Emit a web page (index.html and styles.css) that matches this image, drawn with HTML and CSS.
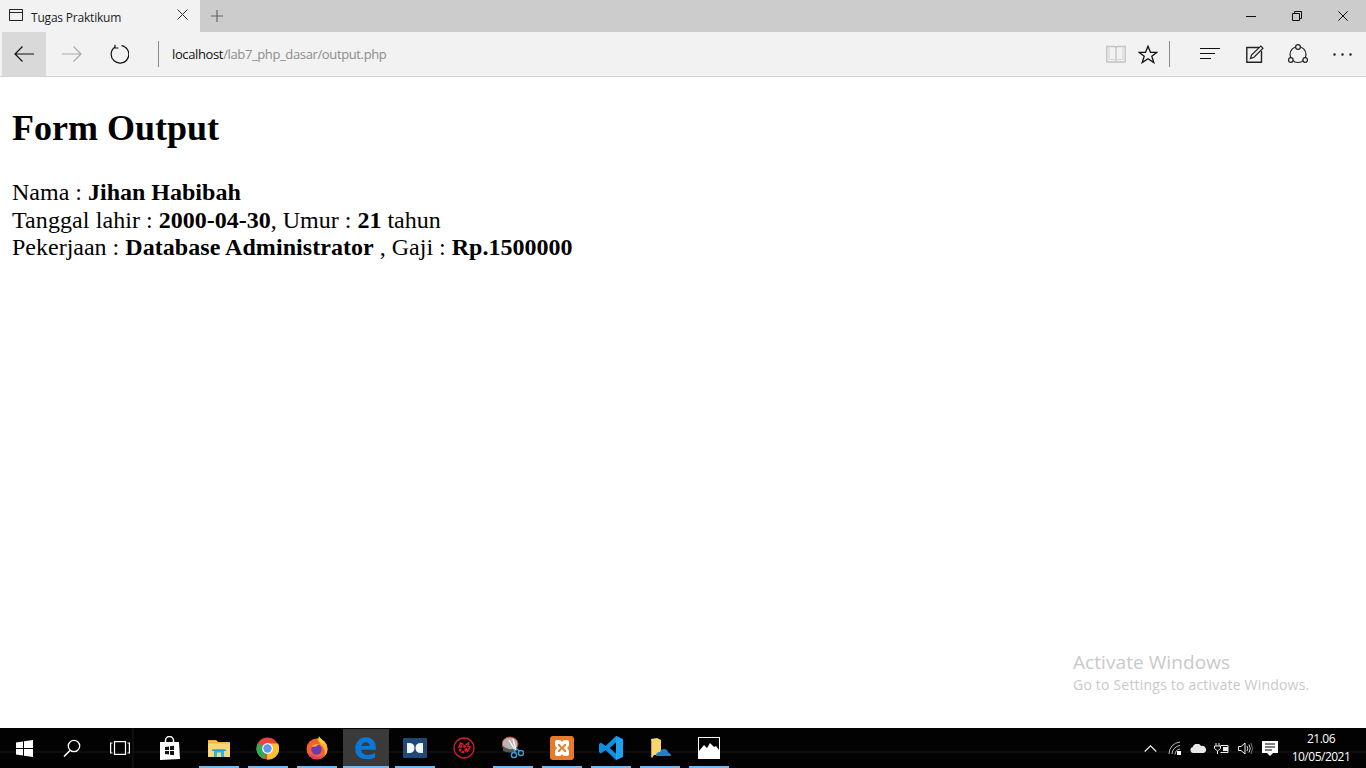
FILE: index.html
```html
<!DOCTYPE html>
<html lang="id">
<head>
<meta charset="utf-8">
<title>Tugas Praktikum</title>
<link rel="stylesheet" href="styles.css">
</head>
<body>
<div class="screen">
  <header class="chrome">
    <div class="tabstrip">
      <div class="tab">
        <svg class="tab-icon" width="14" height="12" viewBox="0 0 14 12"><path d="M.5.5h13v11H.5zM.5 3.500h13" fill="none" stroke="#222"/></svg>
        <span class="tab-title">Tugas Praktikum</span>
        <svg class="tab-close" width="11" height="11" viewBox="0 0 11 11"><path d="M.5.5l10 10M10.500.5l-10 10" stroke="#333" fill="none"/></svg>
      </div>
      <svg class="new-tab" width="12" height="12" viewBox="0 0 12 12"><path d="M6 0v12M0 6h12" stroke="#666" stroke-width="1.200" fill="none"/></svg>
      <div class="win-controls">
        <div class="win-btn"><svg width="10" height="10" viewBox="0 0 10 10"><path d="M0 5.500h10" stroke="#111"/></svg></div>
        <div class="win-btn"><svg width="10" height="10" viewBox="0 0 10 10"><path d="M.5 2.500h7v7h-7zM2.500 2.500v-2h7v7h-2" stroke="#111" fill="none"/></svg></div>
        <div class="win-btn"><svg width="10" height="10" viewBox="0 0 10 10"><path d="M.3.3l9.400 9.400M9.700.3L.3 9.700" stroke="#111" fill="none"/></svg></div>
      </div>
    </div>
    <div class="toolbar">
      <div class="nav-btn active"><svg width="20" height="16" viewBox="0 0 20 16"><path d="M20 8H1M8.500.5L1 8l7.500 7.500" stroke="#111" stroke-width="1.200" fill="none"/></svg></div>
      <div class="nav-btn"><svg width="20" height="16" viewBox="0 0 20 16"><path d="M0 8h19M11.500.5L19 8l-7.500 7.500" stroke="#aaa" stroke-width="1.200" fill="none"/></svg></div>
      <div class="nav-btn nav-reload"><svg width="20" height="20" viewBox="0 0 20 20"><path d="M6.300 2.800A8.800 8.800 0 1 0 12.500 1.600M6 .8v3.200h3.400" stroke="#111" stroke-width="1.200" fill="none"/></svg></div>
      <div class="addr-sep"></div>
      <div class="url"><span class="url-host">localhost</span>/lab7_php_dasar/output.php</div>
      <div class="tools-right">
        <svg class="t-book" width="20" height="18" viewBox="0 0 20 18"><path d="M.8 1.500H8q2 0 2 1.500 0-1.500 2-1.500h7.200V17H.8zM10 3v14" stroke="#c2c2c2" stroke-width="1.300" fill="none"/><path d="M3 2v12.500h5.500q1.500 0 1.500 1 0-1 1.500-1H17V2" stroke="#d4d4d4" fill="none"/></svg>
        <svg class="t-star" width="20" height="19" viewBox="0 0 20 19"><path d="M10 1.300l2.500 6h6.500l-5.200 4 2 6.300L10 13.800l-5.800 3.800 2-6.300-5.200-4h6.500z" stroke="#111" stroke-width="1.300" fill="none"/></svg>
        <div class="t-sep"></div>
        <svg class="t-hub" width="20" height="14" viewBox="0 0 20 14"><path d="M0 1.500h20M0 6.500h15M0 11.500h11" stroke="#111" stroke-width="1.200" fill="none"/></svg>
        <svg class="t-note" width="18" height="18" viewBox="0 0 18 18"><path d="M13 2.500H.8v14.700h14.700V6" stroke="#222" stroke-width="1.400" fill="none"/><path d="M4.500 13.500l1-3.500L14.800 1l2.200 2.200-9 9z" fill="#f2f2f2" stroke="#222" stroke-width="1.200"/></svg>
        <svg class="t-share" width="20" height="20" viewBox="0 0 20 20"><circle cx="10" cy="10.500" r="8" fill="none" stroke="#222" stroke-width="1.200"/><circle cx="10" cy="3" r="2.400" fill="#f2f2f2" stroke="#222" stroke-width="1.200"/><circle cx="2.800" cy="16" r="2.300" fill="#f2f2f2" stroke="#222" stroke-width="1.200"/><circle cx="17.200" cy="16" r="2.300" fill="#f2f2f2" stroke="#222" stroke-width="1.200"/></svg>
        <svg class="t-more" width="19" height="3" viewBox="0 0 19 3"><circle cx="1.500" cy="1.500" r="1.200" fill="#222"/><circle cx="9.500" cy="1.500" r="1.200" fill="#222"/><circle cx="17.500" cy="1.500" r="1.200" fill="#222"/></svg>
      </div>
    </div>
  </header>

  <main class="page">
    <h2 class="page-title">Form Output</h2>
    <p class="result">
      Nama : <b>Jihan Habibah</b><br>
      <span class="fit-label">Tanggal lahir</span> : <b>2000-04-30</b>, Umur : <b>21</b> tahun<br>
      Pekerjaan : <b class="fit-bold">Database Administrator</b> , Gaji : <b>Rp.1500000</b>
    </p>
    <div class="watermark">
      <div class="wm-title">Activate Windows</div>
      <div class="wm-sub">Go to Settings to activate Windows.</div>
    </div>
  </main>

  <footer class="taskbar">
    <div class="task-slot sys"><svg width="17" height="17" viewBox="0 0 17 17"><path d="M0 2.400L7 1.400V8H0zM8 1.200L17 0V8H8zM0 9h7v6.600L0 14.600zM8 9h9v8L8 15.800z" fill="#fff"/></svg></div>
    <div class="task-slot sys"><svg width="18" height="18" viewBox="0 0 18 18"><circle cx="11" cy="7" r="5.700" fill="none" stroke="#fff" stroke-width="1.300"/><path d="M7 11.500L1 17.500" stroke="#fff" stroke-width="1.600"/></svg></div>
    <div class="task-slot sys"><svg width="20" height="14" viewBox="0 0 20 14"><path d="M4.500.6h11v12.800h-11zM2.500 2H.6v10h1.900M17.500 2h1.900v10h-1.900" fill="none" stroke="#fff" stroke-width="1.200"/></svg></div>
    <div class="task-slot store"><svg width="21" height="24" viewBox="0 0 21 24"><path d="M1 6h19l1 17L1 24z" fill="#fff"/><path d="M6.500 7V4.500a4 4 0 0 1 8 0V7" fill="none" stroke="#fff" stroke-width="1.500"/><path d="M6 11l4-.5V14H6zM11 10.300l4-.5V14h-4zM6 15h4v3.500l-4-.5zM11 15h4v4.200l-4-.5z" fill="#111"/></svg></div>
    <div class="task-slot open"><svg width="22" height="18" viewBox="0 0 22 18"><path d="M0 1h8l2 2h12v15H0z" fill="#f6d77a"/><path d="M0 2.500h8V1H0z" fill="#e0ad3a"/><path d="M0 3h22v1.500H0z" fill="#e8b94a"/><path d="M6 18v-7.500h10V18h-3v-4.500H9V18z" fill="#29b6e8"/><path d="M4 10.500h14V12H4z" fill="#1b9fd4"/></svg></div>
    <div class="task-slot open"><svg width="23" height="23" viewBox="0 0 23 23"><circle cx="11.500" cy="11.500" r="11" fill="#e8453c"/><path d="M11.500 11.500L1.900 6.100A11 11 0 0 0 8 22z" fill="#34a853"/><path d="M11.500 6.500H22a11 11 0 0 1-11 16z" fill="#fbc02d"/><circle cx="11.500" cy="11.500" r="5.400" fill="#fff"/><circle cx="11.500" cy="11.500" r="4.200" fill="#5a97ee"/></svg></div>
    <div class="task-slot open"><svg width="24" height="24" viewBox="0 0 24 24"><circle cx="12" cy="13" r="10.500" fill="#f4622b"/><path d="M12 2.500A10.500 10.500 0 0 1 22.500 13c0 3-1 5-3 7 1-4 0-9-4-11-1-2-2-4-3.500-6.500z" fill="#fbb03b"/><path d="M14 0c1 2.500 5 4.500 6.500 9-2-2-4-3-6-3.500C13 4 13.500 2 14 0z" fill="#fdd835"/><circle cx="11.500" cy="13.500" r="5.200" fill="#6a3ab2"/><path d="M6.500 11c1.500-2.500 5-3.500 7.500-2.500-1.500.5-2 1-2.500 2z" fill="#f9a33a"/><path d="M3 18c2 3 6 5 9.500 5 2.500 0 5-1 6.500-2.500-3 1-6.500 1-9-.5-3-1.500-5-1.500-7-2z" fill="#e8376e"/></svg></div>
    <div class="task-slot open current"><svg class="slot-icon" width="21" height="22" viewBox="0 0 21 22"><path d="M.2 11.500C.5 5 5 .3 11 .3c6 0 9.800 4.200 9.800 10v2.500H6.200c.3 3.700 3 5.200 6.300 5.200 2.800 0 5.500-.8 7.500-2.200v4.700c-2.200 1.200-5 1.800-8 1.800-7 0-11-3.700-11.500-8-.3-3.500 1.500-7 5-9-1.300 1.400-2.200 3-2.500 5 2.800-3.800 9.800-3.800 11-1 .2.800.2 1.400.1 2.200H8.500" fill="#0a78d6"/><path d="M6.400 9h8.300c0-2.300-1.500-3.800-4-3.800-2.300 0-3.900 1.500-4.300 3.800z" fill="#3a3a3a"/></svg></div>
    <div class="task-slot open"><svg width="24" height="20" viewBox="0 0 24 20"><rect width="24" height="20" rx="1" fill="#1f4a78"/><path d="M4 5h2q5.500 0 5.500 5T6 15H4zM20 5h-2q-5.500 0-5.500 5t5.500 5h2z" fill="#f4f7fa"/></svg></div>
    <div class="task-slot"><svg width="22" height="22" viewBox="0 0 22 22"><circle cx="11" cy="11" r="10" fill="none" stroke="#d3202a" stroke-width="1.300"/><circle cx="10" cy="12" r="3" fill="none" stroke="#d3202a" stroke-width="2.600" stroke-dasharray="2.500 1"/><path d="M5.500 11l2-5 3 1.500M14 15l3-5-2-1 .5-3-3 2" fill="none" stroke="#d3202a" stroke-width="1.500"/></svg></div>
    <div class="task-slot open"><svg width="22" height="24" viewBox="0 0 22 24"><ellipse cx="8" cy="8" rx="8" ry="7" fill="#b9b4b4" stroke="#d8382e"/><path d="M1 10q7 6 14 1v4q-7 3-14 0z" fill="#555"/><path d="M7 4l6 10M11 3l3 11" stroke="#fff" stroke-width="1.200"/><circle cx="12" cy="19" r="2.600" fill="none" stroke="#3d9fd8" stroke-width="1.500"/><circle cx="19" cy="17" r="2.600" fill="none" stroke="#3d9fd8" stroke-width="1.500"/><path d="M13 16l-1-3M17 15l-3-3" stroke="#3d9fd8" stroke-width="1.300"/></svg></div>
    <div class="task-slot open"><svg width="24" height="24" viewBox="0 0 24 24"><rect width="24" height="24" rx="3" fill="#e97a2a"/><path d="M5 6q0-2 2-2h2.500q1.500 0 2.500 2 1-2 2.500-2H17q2 0 2 2v2.500q0 2-2 3.500 2 1.500 2 3.500V18q0 2-2 2h-2.500q-1.500 0-2.500-2-1 2-2.500 2H7q-2 0-2-2v-2.500q0-2 2-3.500-2-1.500-2-3.500z" fill="#fff"/><path d="M8 8h1.500l2.500 3 2.500-3H16v1.500L13.500 12l2.500 2.500V16h-1.500L12 13l-2.500 3H8v-1.500l2.500-2.500L8 9.500z" fill="#e97a2a"/></svg></div>
    <div class="task-slot open"><svg width="24" height="24" viewBox="0 0 24 24"><path d="M17 0l7 3.300v17.400L17 24 6.500 14 2 17.500 0 16V8l2-1.500L6.500 10zM17 6.500L11 12l6 5.500z" fill="#0f8fe0"/><path d="M17 0l7 3.300v17.400L17 24z" fill="#1aa3ee"/><path d="M17 6.500L11 12l6 5.500z" fill="#000"/></svg></div>
    <div class="task-slot open"><svg width="22" height="22" viewBox="0 0 22 22"><path d="M2 2l6-1 4 2v15H5l-2 3z" fill="#f6d56b"/><path d="M2 2v18l1 1V5z" fill="#c9a33f"/><path d="M7 19q0-4 4-4 1-3.500 4.500-3t3.500 3.500q3 .5 3 3.500z" fill="#1f7fd0"/></svg></div>
    <div class="task-slot open"><svg width="22" height="22" viewBox="0 0 22 22"><rect x=".5" y=".5" width="21" height="21" fill="#000" stroke="#fff"/><path d="M1 21v-7l5-6 3 3 3-5 4 4 2-1 3 4v8z" fill="#fff"/></svg></div>
    <div class="tray">
      <svg class="tr-chev" width="13" height="7" viewBox="0 0 13 7"><path d="M.7 6.500L6.500.8l5.800 5.700" stroke="#eee" stroke-width="1.200" fill="none"/></svg>
      <svg class="tr-wifi" width="14" height="14" viewBox="0 0 14 14"><path d="M1 13A12 12 0 0 1 12 1M4 13a9 9 0 0 1 8-8.500M7 13.500A6 6 0 0 1 12 8" stroke="#bbb" fill="none"/><rect x="9" y="10" width="4" height="4" fill="#fff"/></svg>
      <svg class="tr-cloud" width="16" height="9" viewBox="0 0 16 9"><path d="M3 9a3 3 0 0 1-.3-5.900A4.500 4.500 0 0 1 11 2a3.500 3.500 0 0 1 2.500 7z" fill="#e8e8e8"/></svg>
      <svg class="tr-batt" width="15" height="11" viewBox="0 0 15 11"><path d="M6.500 2.500H14v7H6.500" fill="none" stroke="#eee"/><rect x="9" y="4" width="5" height="4" fill="#eee"/><path d="M2 0v3M5 0v3M.5 3h6v2.500L3.500 8 .5 5.500zM3.500 8v3" fill="none" stroke="#eee"/></svg>
      <svg class="tr-vol" width="15" height="13" viewBox="0 0 15 13"><path d="M.5 4.500H3L7 1v11L3 8.500H.5z" fill="none" stroke="#eee"/><path d="M9 4q1.500 2.500 0 5M11 2.500q2.500 4 0 8" fill="none" stroke="#ddd"/><path d="M13 1q3 5.500 0 11" fill="none" stroke="#777"/></svg>
      <svg class="tr-note" width="16" height="15" viewBox="0 0 16 15"><path d="M0 0h16v12h-5l-3 3-3-3H0z" fill="#fff"/><path d="M3 3h10M3 6h10M3 9h7" stroke="#000"/></svg>
      <div class="clock"><div>21.06</div><div>10/05/2021</div></div>
    </div>
  </footer>
</div>
</body>
</html>
```
FILE: styles.css
```css
* { box-sizing: border-box; }
html, body { margin: 0; height: 100%; overflow: hidden; }
.screen { width: 1366px; height: 768px; display: flex; flex-direction: column; background: #fff; }

.chrome { flex: none; }
.tabstrip { height: 32px; background: #cccccc; display: flex; align-items: center; }
.tab { width: 200px; height: 32px; background: #f2f2f2; display: flex; align-items: center; padding-left: 9px; }
.tab-icon { flex: none; margin-top: -3px; }
.tab-title { font: 12px "Open Sans", sans-serif; letter-spacing: -.2px; color: #222; margin-left: 8px; width: 147px; margin-top: 3px; }
.tab-close { flex: none; margin-top: -3px; margin-left: -1px; }
.new-tab { flex: none; margin-left: 11px; margin-top: -1px; }
.win-controls { margin-left: auto; display: flex; }
.win-btn { width: 46px; height: 32px; display: flex; align-items: center; justify-content: center; }

.toolbar { height: 45px; background: #f2f2f2; border-bottom: 1px solid #cfcfcf; display: flex; align-items: center; padding-left: 2px; }
.nav-btn { width: 44px; height: 44px; margin-right: 4px; display: flex; align-items: center; justify-content: center; flex: none; }
.nav-btn.active { background: #d9d9d9; }
.nav-reload svg { margin-left: -2px; }
.addr-sep { width: 1px; height: 26px; background: #8a8a8a; margin-left: 12px; flex: none; }
.url { font: 13px "Open Sans", sans-serif; letter-spacing: -.37px; color: #8c8c8c; margin-left: 13px; }
.url-host { color: #111; }
.tools-right { margin-left: auto; display: flex; align-items: center; padding-right: 14px; }
.t-book { margin-right: 12px; }
.t-sep { width: 1px; height: 26px; background: #8a8a8a; margin: 0 30px 0 11px; }
.t-hub { margin-right: 26px; }
.t-note { margin-right: 24px; margin-top: -1px; }
.t-share { margin-right: 25px; }

.page { flex: 1; position: relative; padding: 0 12px; font-family: "Liberation Serif", "Times New Roman", serif; color: #000; }
.page-title { font-size: 36px; font-weight: bold; margin: 31px 0 30px; line-height: 41px; }
.result { font-size: 24px; line-height: 27.5px; margin: 0; }
.fit-label { letter-spacing: .09px; }
.fit-bold { letter-spacing: .05px; }
.watermark { position: absolute; left: 1073px; top: 572px; font-family: "Open Sans", sans-serif; color: #c9c9c9; white-space: nowrap; }
.wm-title { font-size: 19px; line-height: 26px; letter-spacing: .07px; }
.wm-sub { font-size: 14px; line-height: 20px; letter-spacing: .2px; }

.taskbar { flex: none; height: 40px; background-color: #020202;
  background-image:
    linear-gradient(90deg, transparent 132px, #0e0e0e 132px, #0e0e0e 134px, transparent 134px),
    linear-gradient(0deg, transparent 15px, #0d0d0d 15px, #0d0d0d 17px, transparent 17px);
  display: flex; align-items: stretch; }
.task-slot { width: 49px; flex: none; position: relative; display: flex; align-items: center; justify-content: center; }
.task-slot.sys { width: 48px; }
.task-slot.store { width: 50px; }
.task-slot.open::after { content: ""; position: absolute; left: 5px; right: 4px; bottom: 0; height: 2px; background: #76b9ed; }
.task-slot.current::before { content: ""; position: absolute; left: 2px; right: 1px; top: 1px; bottom: 0; background: #3a3a3a; }
.task-slot.current::after { left: 2px; right: 1px; }
.slot-icon { position: relative; }
.tray { margin-left: auto; display: flex; align-items: center; color: #fff; }
.tr-chev { margin-right: 11px; }
.tr-wifi { margin-right: 8px; }
.tr-cloud { margin-right: 8px; }
.tr-batt { margin-right: 9px; }
.tr-vol { margin-right: 9px; }
.tr-note { margin-right: 6px; }
.clock { width: 82px; font: 12px/18px "Open Sans", sans-serif; letter-spacing: -.5px; text-align: center; padding-right: 8px; }
```
